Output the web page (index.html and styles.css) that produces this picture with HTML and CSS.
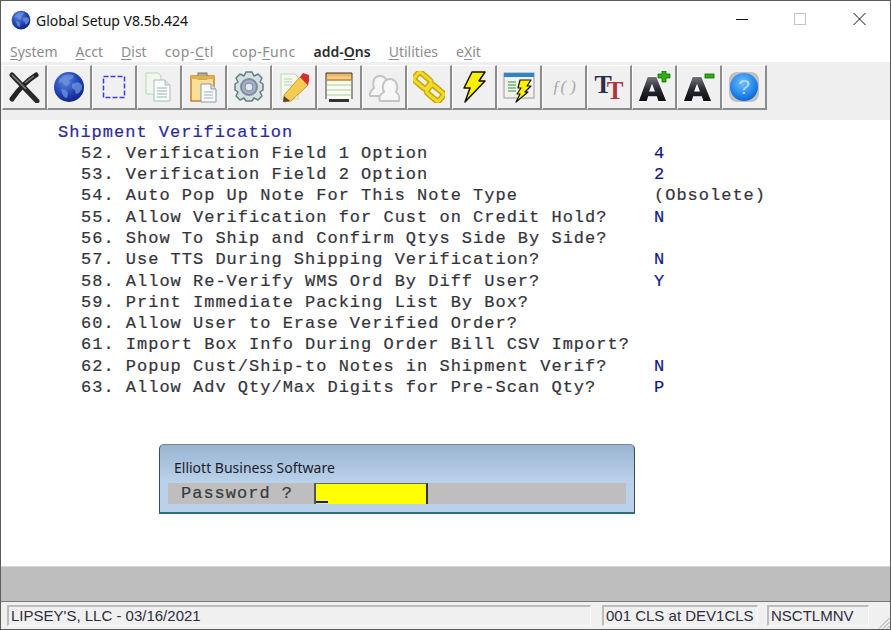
FILE: index.html
```html
<!DOCTYPE html>
<html lang="en">
<head>
<meta charset="utf-8">
<title>Global Setup V8.5b.424</title>
<link rel="stylesheet" href="styles.css">
</head>
<body>
<svg class="defs" width="0" height="0" aria-hidden="true">
  <defs>
    <radialGradient id="gGlobe" cx="38%" cy="32%" r="75%">
      <stop offset="0" stop-color="#5f86e0"/><stop offset=".55" stop-color="#2347b4"/><stop offset="1" stop-color="#0d1f80"/>
    </radialGradient>
    <radialGradient id="gHelp" cx="45%" cy="35%" r="70%">
      <stop offset="0" stop-color="#6fc0ff"/><stop offset=".7" stop-color="#1c80ea"/><stop offset="1" stop-color="#0a5cc8"/>
    </radialGradient>
    <linearGradient id="gA" x1="0" y1="0" x2="0" y2="1">
      <stop offset="0" stop-color="#74747a"/><stop offset=".5" stop-color="#2a2a34"/><stop offset="1" stop-color="#0c0c14"/>
    </linearGradient>
    <linearGradient id="gList" x1="0" y1="0" x2="0" y2="1">
      <stop offset="0" stop-color="#e8a850"/><stop offset="1" stop-color="#f8dc98"/>
    </linearGradient>
    <symbol id="globe" viewBox="0 0 32 32">
      <circle cx="16" cy="16" r="15" fill="url(#gGlobe)"/>
      <path d="M10 5c4-2 9-2 11 0l-2 3-3 1 1 3-3 3-3-1-2-3-3 1 0-3zM19 13l6-2 4 3 0 4-3 4-3 1-1-4-3-2zM8 18l5 1 2 3-1 5-3-1-2-4z" fill="#6f93dc" opacity=".75"/>
    </symbol>
    <symbol id="letterA" viewBox="0 0 32 32">
      <path d="M11 4h9l10 25h-8l-1.500-5h-9L10 29H2zM15.500 11l-3 8h6z" fill="url(#gA)" stroke="#fff" stroke-width="1.500" paint-order="stroke"/>
    </symbol>
  </defs>
</svg>
<div class="window">
  <header class="titlebar">
    <svg class="app-icon" width="20" height="20"><use href="#globe"/></svg>
    <span class="app-title">Global Setup V8.5b.424</span>
    <div class="controls">
      <svg class="ctl" width="58" height="14" viewBox="0 0 58 14"><path d="M0 7.500h12" stroke="#111" fill="none"/></svg>
      <svg class="ctl" width="59" height="14" viewBox="0 0 59 14"><rect x=".5" y="1.500" width="11" height="11" stroke="#c4c4c4" fill="none"/></svg>
      <svg class="ctl" width="13" height="14" viewBox="0 0 13 14"><path d="M.5 1l12 12M12.500 1l-12 12" stroke="#111" fill="none"/></svg>
    </div>
  </header>
  <nav class="menubar">
    <span class="menu"><u>S</u>ystem</span>
    <span class="menu"><u>A</u>cct</span>
    <span class="menu"><u>D</u>ist</span>
    <span class="menu wide">cop-<u>C</u>tl</span>
    <span class="menu wide">cop-<u>F</u>unc</span>
    <span class="menu active">add-<u>O</u>ns</span>
    <span class="menu"><u>U</u>tilities</span>
    <span class="menu">e<u>X</u>it</span>
  </nav>
  <div class="toolbar">
    <div class="tool"><svg width="32" height="32" viewBox="0 0 32 32"><path d="M4 4l25 26" stroke="#2a2a2a" stroke-width="5" stroke-linecap="round" fill="none"/><path d="M28 4C20 9 11 18 4 28" stroke="#222" stroke-width="5" stroke-linecap="round" fill="none"/><path d="M4 4l14 14M26 5L17 12" stroke="#7c7c7c" stroke-width="1.500" fill="none"/></svg></div>
    <div class="tool"><svg width="32" height="32"><use href="#globe"/></svg></div>
    <div class="tool"><svg width="32" height="32" viewBox="0 0 32 32"><rect x="5.500" y="5.500" width="21" height="21" fill="none" stroke="#3a3ae8" stroke-width="1.500" stroke-dasharray="5 2"/></svg></div>
    <div class="tool"><svg width="32" height="32" viewBox="0 0 32 32"><path d="M3 2h12l3 3v18H3z" fill="#f2f7ee" stroke="#b8d4b4"/><path d="M11 9h11l5 5v16H11z" fill="#fbfbf8" stroke="#a8bcc4"/><path d="M22 9v5h5" fill="#d8e4e4" stroke="#a8bcc4"/><path d="M14 17h10M14 20h10M14 23h10M14 26h10" stroke="#8fb4bc"/></svg></div>
    <div class="tool"><svg width="32" height="32" viewBox="0 0 32 32"><rect x="3" y="5" width="23" height="25" fill="#f8e098" stroke="#c88030" stroke-width="1.500"/><rect x="10" y="2" width="9" height="6" fill="#b4aa8c" stroke="#807860"/><path d="M3 5h23v3H3z" fill="#e8b040"/><path d="M13 13h10l5 5v13H13z" fill="#fbfbfb" stroke="#8a9aa8"/><path d="M23 13v5h5" fill="#d8e0e8" stroke="#8a9aa8"/><path d="M16 21h9M16 24h9M16 27h9" stroke="#9ab4c0"/></svg></div>
    <div class="tool"><svg width="32" height="32" viewBox="0 0 32 32"><path d="M13 1h6l2 4 4-2 4 4-2 4 3 2v6l-3 2 2 4-4 4-4-2-2 3h-6l-2-3-4 2-4-4 2-4-3-2v-6l3-2-2-4 4-4 4 2z" fill="#d4e0e0" stroke="#5f7d84" stroke-width="1.500" stroke-linejoin="round"/><circle cx="16" cy="16" r="8" fill="#a4aec8" stroke="#7c8c9c" stroke-width="2"/><circle cx="16" cy="16" r="4" fill="#e4e8ec" stroke="#7a8aa0"/></svg></div>
    <div class="tool"><svg width="32" height="32" viewBox="0 0 32 32"><path d="M3 3h14l3 3v22H3z" fill="#f4f8ee" stroke="#c0d4b4"/><path d="M6 8h8M6 11h8M6 14h8" stroke="#b4d0b0"/><path d="M6 24L22 6l8 8-17 16-7 1z" fill="#f4cc50" stroke="#d09030" stroke-width="1"/><path d="M22 6l3-4 6 2 0 6-1 4z" fill="#d82c34"/><path d="M5 31l1-6 6 5z" fill="#5a4030"/></svg></div>
    <div class="tool"><svg width="32" height="32" viewBox="0 0 32 32"><rect x="3" y="2" width="26" height="26" fill="#fbfbf2"/><path d="M3 2h26v7H3z" fill="url(#gList)"/><path d="M3 2h26M3 2v26M29 2v26" stroke="#3a3a3a" fill="none"/><path d="M3 9h26" stroke="#c08030" stroke-width="1.500"/><path d="M4 14h24M4 19h24M4 24h24" stroke="#a8cca0"/><path d="M6 28h20v3H6z" fill="#333"/></svg></div>
    <div class="tool"><svg width="32" height="32" viewBox="0 0 32 32"><g fill="#f7f7f7" stroke="#c4c4c4" stroke-width="2" stroke-linejoin="round"><path d="M2 25c-1-4 2-6 4-8-2-6 0-12 6-12s8 5 6 12l3 3v5H5z"/><path d="M12 30c-2-5 1-7 4-9-3-6 0-13 6-13s9 7 6 13c3 2 4 4 3 9z"/></g></svg></div>
    <div class="tool"><svg width="32" height="32" viewBox="0 0 32 32"><g fill="none"><rect x="-8" y="-5" width="16" height="10" rx="2.500" transform="translate(9.500 9.500) rotate(40)" stroke="#c8a800" stroke-width="6"/><rect x="-8" y="-5" width="16" height="10" rx="2.500" transform="translate(22 22) rotate(40)" stroke="#c8a800" stroke-width="6"/><rect x="-8" y="-5" width="16" height="10" rx="2.500" transform="translate(9.500 9.500) rotate(40)" stroke="#f0dc28" stroke-width="3"/><rect x="-8" y="-5" width="16" height="10" rx="2.500" transform="translate(22 22) rotate(40)" stroke="#f0dc28" stroke-width="3"/></g></svg></div>
    <div class="tool"><svg width="32" height="32" viewBox="0 0 32 32"><path d="M14 1h13l-6 9h6L7 31l5-14H6z" fill="#fdf000" stroke="#111" stroke-width="1.500" stroke-linejoin="round"/></svg></div>
    <div class="tool"><svg width="32" height="32" viewBox="0 0 32 32"><rect x="1" y="2" width="30" height="25" fill="#f2f2ea" stroke="#9a9a9a"/><rect x="1" y="2" width="30" height="4" fill="#2c84cc"/><path d="M5 11h8M5 14h8M5 17h8M5 20h8" stroke="#8cc494" stroke-width="2"/><path d="M17 9h11l-4 6h4l-6 6h3L13 31l4-8h-3l4-6h-3z" fill="#fdf000" stroke="#111" stroke-width="1.200" stroke-linejoin="round"/></svg></div>
    <div class="tool"><span class="glyph-f">ƒ( )</span></div>
    <div class="tool tt"><span class="tt-big">T</span><span class="tt-red">T</span></div>
    <div class="tool"><svg width="34" height="32" viewBox="0 0 34 32"><use href="#letterA" width="31" height="31" y="2"/><path d="M25 0h4v3h4v4h-4v4h-4V7h-4V3h4z" fill="#30b010" stroke="#136608" stroke-width=".8"/></svg></div>
    <div class="tool"><svg width="34" height="32" viewBox="0 0 34 32"><use href="#letterA" width="31" height="31" y="2"/><rect x="23" y="3" width="9" height="4" fill="#30b010" stroke="#136608" stroke-width=".8"/></svg></div>
    <div class="tool"><svg width="32" height="32" viewBox="0 0 32 32"><rect x="1" y="1" width="30" height="30" rx="8" fill="#c0c0c0"/><circle cx="16" cy="16" r="14" fill="url(#gHelp)"/><text class="help-mark" x="16" y="23" text-anchor="middle">?</text></svg></div>
  </div>
  <main class="terminal">
    <h1 class="screen-title">Shipment Verification</h1>
    <ul class="options">
      <li class="option"><span class="opt-label">52. Verification Field 1 Option</span><span class="opt-value">4</span></li>
      <li class="option"><span class="opt-label">53. Verification Field 2 Option</span><span class="opt-value">2</span></li>
      <li class="option"><span class="opt-label">54. Auto Pop Up Note For This Note Type</span><span class="opt-value plain">(Obsolete)</span></li>
      <li class="option"><span class="opt-label">55. Allow Verification for Cust on Credit Hold?</span><span class="opt-value">N</span></li>
      <li class="option"><span class="opt-label">56. Show To Ship and Confirm Qtys Side By Side?</span><span class="opt-value"></span></li>
      <li class="option"><span class="opt-label">57. Use TTS During Shipping Verification?</span><span class="opt-value">N</span></li>
      <li class="option"><span class="opt-label">58. Allow Re-Verify WMS Ord By Diff User?</span><span class="opt-value">Y</span></li>
      <li class="option"><span class="opt-label">59. Print Immediate Packing List By Box?</span><span class="opt-value"></span></li>
      <li class="option"><span class="opt-label">60. Allow User to Erase Verified Order?</span><span class="opt-value"></span></li>
      <li class="option"><span class="opt-label">61. Import Box Info During Order Bill CSV Import?</span><span class="opt-value"></span></li>
      <li class="option"><span class="opt-label">62. Popup Cust/Ship-to Notes in Shipment Verif?</span><span class="opt-value">N</span></li>
      <li class="option"><span class="opt-label">63. Allow Adv Qty/Max Digits for Pre-Scan Qty?</span><span class="opt-value">P</span></li>
    </ul>
    <div class="dialog">
      <div class="dialog-title">Elliott Business Software</div>
      <div class="dialog-body">
        <span class="prompt">Password ?</span>
        <span class="field"><span class="cursor"></span></span>
      </div>
    </div>
  </main>
  <div class="grayband"></div>
  <footer class="statusbar">
    <div class="panel p-company">LIPSEY'S, LLC - 03/16/2021</div>
    <div class="panel p-site">001 CLS at DEV1CLS</div>
    <div class="panel p-user">NSCTLMNV</div>
    <svg class="grip" width="12" height="12" viewBox="0 0 12 12"><path d="M11.500 1L1 11.500M11.500 5L5 11.500M11.500 9L9 11.500" stroke="#9a9a9a" fill="none"/></svg>
  </footer>
</div>
</body>
</html>
```
FILE: styles.css
```css
* { box-sizing: border-box; }
html, body { margin: 0; padding: 0; width: 891px; height: 630px; overflow: hidden; background: #fff; }
.defs { display: block; height: 0; }
.window {
  width: 891px; height: 630px; display: flex; flex-direction: column;
  border: 1px solid #5c5c5c; background: #fff;
  font-family: "Noto Sans", "Open Sans", sans-serif;
}
.titlebar { height: 39px; display: flex; align-items: center; padding-left: 10px; flex: none; }
.app-icon { flex: none; margin-top: -2px; }
.app-title { margin-left: 5px; font-size: 14px; color: #111; margin-top: -1px; }
.controls { margin-left: auto; margin-right: 24px; display: flex; margin-top: -3px; }
.ctl { display: block; flex: none; }
.menubar { height: 22px; flex: none; display: flex; gap: 18px; padding-left: 9px; align-items: center; font-size: 14px; color: #8c8c8c; }
.menu.wide { letter-spacing: .5px; }
.menu.active { color: #2c2c2c; font-weight: 600; }
.menu u { text-underline-offset: 2px; text-decoration-thickness: 1px; }
.toolbar { height: 58px; flex: none; background: #efefef; display: flex; padding: 3px 0 0 1px; align-items: flex-start; }
.tool {
  width: 45px; height: 45px; flex: none; display: flex; align-items: center; justify-content: center;
  background: #f0f0f0; border-top: 1px solid #fff; border-left: 1px solid #fff;
  border-right: 2px solid #8c8c8c; border-bottom: 2px solid #8c8c8c;
}
.glyph-f { font-family: "Liberation Serif", serif; font-style: italic; font-size: 17px; color: #a8a8a8; }
.tt { font-family: "Liberation Serif", serif; font-weight: 700; align-items: flex-start; }
.tt-big { font-size: 26px; line-height: 26px; color: #2e2e48; margin-top: 6px; }
.tt-red { font-size: 25px; line-height: 25px; color: #b0343c; margin: 12px 0 0 -5px; }
.help-mark { font-family: "Liberation Sans", sans-serif; font-size: 21px; fill: #b4dcff; }
.terminal {
  flex: 1; min-height: 0; position: relative; background: #fff; padding: 1.5px 0 0 57px;
  font-family: "Liberation Mono", "DejaVu Sans Mono", monospace; font-size: 17px;
  letter-spacing: 1px; color: #34343c; line-height: 21.3px; -webkit-text-stroke: .2px currentColor;
}
.screen-title { margin: 0; font: inherit; color: #2d2a98; }
.options { list-style: none; margin: 0; padding: 0 0 0 23px; }
.option { display: grid; grid-template-columns: 573px auto; height: 21.3px; white-space: pre; }
.opt-value { color: #14148c; }
.opt-value.plain { color: #34343c; }
.dialog {
  position: absolute; left: 158px; top: 324px; width: 476px; height: 70px;
  border: 1px solid #3c4c58; border-top-color: #7a8894; border-radius: 5px 5px 0 0;
  border-bottom: 2px solid #2f6f86;
  background: linear-gradient(#9ab4d0, #bad1ea 55%, #b9d1ea);
  padding: 13px 8px 0 8px;
}
.dialog-title { height: 25px; padding-left: 6px; font-family: "Noto Sans", sans-serif; font-size: 14px; letter-spacing: 0; color: #1c1c28; line-height: 20px; -webkit-text-stroke: 0; }
.dialog-body { height: 21px; background: #bebebe; display: flex; padding-left: 13px; line-height: 21px; }
.prompt { width: 133px; flex: none; color: #3a3a3a; }
.field { width: 114px; height: 21px; background: #ffff00; border-left: 2px solid #555; border-right: 2px solid #333; border-top: 1px solid #666; position: relative; flex: none; }
.cursor { position: absolute; left: 0; bottom: 1px; width: 12px; height: 2px; background: #1010f0; }
.grayband { height: 36px; flex: none; background: #bebebe; border-top: 1px solid #d8d8d8; border-bottom: 1px solid #777; }
.statusbar { height: 27px; flex: none; background: #f0f0f0; display: flex; padding: 3px 0 0 6px; position: relative; font-family: "Liberation Sans", sans-serif; font-size: 15px; color: #2c2c3c; }
.panel { height: 21px; border: 1px solid #c4c4c4; border-top-width: 2px; border-left-width: 2px; border-top-color: #bcbcbc; border-left-color: #bcbcbc; border-right-color: #fafafa; border-bottom-color: #fafafa; line-height: 18px; padding-left: 2px; white-space: nowrap; overflow: hidden; }
.p-company { width: 584px; margin-right: 11px; }
.p-site { width: 156px; margin-right: 9px; }
.p-user { width: 102px; }
.grip { position: absolute; right: 0; bottom: 0; }
```
